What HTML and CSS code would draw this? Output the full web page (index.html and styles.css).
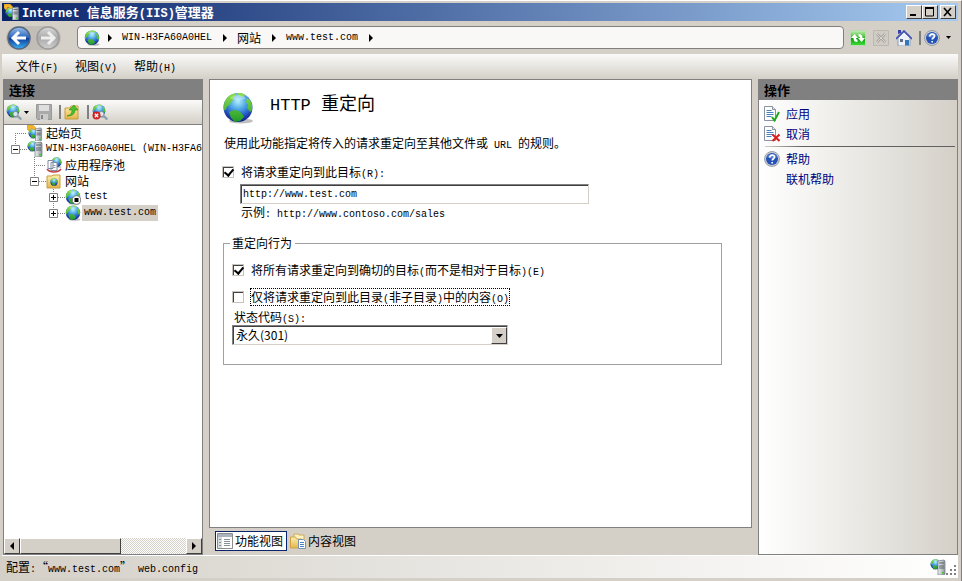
FILE: index.html
```
<!DOCTYPE html>
<html lang="zh-CN">
<head>
  <meta charset="UTF-8" />
  <meta name="viewport" content="width=device-width, initial-scale=1.0"/>
  <title>Internet 信息服务(IIS)管理器</title>
  <link rel="stylesheet" href="styles.css">
</head>
<body>
  <!-- shared icons -->
  <svg class="sprite" aria-hidden="true">
    <defs>
      <radialGradient id="sea" cx="50%" cy="28%" r="70%">
        <stop offset="0" stop-color="#b4effc"/>
        <stop offset="0.4" stop-color="#4fa8e6"/>
        <stop offset="0.75" stop-color="#2457c4"/>
        <stop offset="1" stop-color="#141f8c"/>
      </radialGradient>
      <linearGradient id="land" x1="0" y1="0" x2="0" y2="1">
        <stop offset="0" stop-color="#8fe04a"/>
        <stop offset="1" stop-color="#1f9a2b"/>
      </linearGradient>
      <linearGradient id="metal" x1="0" y1="0" x2="1" y2="0">
        <stop offset="0" stop-color="#f2f4f6"/>
        <stop offset="1" stop-color="#8d959c"/>
      </linearGradient>
      <linearGradient id="folder" x1="0" y1="0" x2="0" y2="1">
        <stop offset="0" stop-color="#fdf0b0"/>
        <stop offset="1" stop-color="#e3b548"/>
      </linearGradient>
      <linearGradient id="blue" x1="0" y1="0" x2="0" y2="1">
        <stop offset="0" stop-color="#9dc3ec"/>
        <stop offset="0.48" stop-color="#2a62bd"/>
        <stop offset="0.52" stop-color="#0d3c9c"/>
        <stop offset="1" stop-color="#3db1f2"/>
      </linearGradient>
      <linearGradient id="silver" x1="0" y1="0" x2="0" y2="1">
        <stop offset="0" stop-color="#d9d9d9"/>
        <stop offset="0.5" stop-color="#a9a9a9"/>
        <stop offset="1" stop-color="#d0d0d0"/>
      </linearGradient>
      <linearGradient id="green" x1="0" y1="0" x2="0" y2="1">
        <stop offset="0" stop-color="#c4f2b4"/>
        <stop offset="0.45" stop-color="#43bb35"/>
        <stop offset="0.55" stop-color="#109c10"/>
        <stop offset="1" stop-color="#3fe23a"/>
      </linearGradient>
    </defs>

    <symbol id="globe" viewBox="0 0 32 32">
      <ellipse cx="19" cy="29" rx="12" ry="2.500" fill="#000" opacity="0.25"/>
      <circle cx="16" cy="15.500" r="14.500" fill="url(#sea)"/>
      <path d="M2 14C2 8 7 2 13 1.500l1 2-3 2 1 2-3 2-1 3-3 2-1 3-2 1zM15 1h5l3 2-2 2-4-1zM25 6l3 2 2 5v5l-2 2-3-4 1-3-2-3zM7 20l5-2 5 1 4 4 1 2-4 4-5 1-4-4z" fill="url(#land)"/>
      <path d="M8 6c4-4 12-4 16 0-4 3-12 3-16 0z" fill="#fff" opacity="0.3"/>
    </symbol>

    <symbol id="server" viewBox="0 0 16 16">
      <path d="M8 2l6-1 1 1v13l-1 1H8z" fill="url(#metal)" stroke="#6d757d" stroke-width="0.7"/>
      <path d="M9 4h5M9 7h5M9 9h5" stroke="#59626b"/>
      <path d="M12 13h2v1.500h-2z" fill="#35d01c"/>
    </symbol>

    <symbol id="host" viewBox="0 0 16 16">
      <svg x="0" y="0" width="11" height="11"><use href="#globe"/></svg>
      <use href="#server"/>
    </symbol>

    <symbol id="start" viewBox="0 0 16 16">
      <svg x="1" y="3" width="11" height="11"><use href="#globe"/></svg>
      <path d="M0 0h6l3 3-2 2-3-2-2 3-2-2z" fill="#f4b52c" stroke="#c98512" stroke-width="0.5"/>
      <svg x="1" y="2" width="15" height="14"><use href="#server"/></svg>
    </symbol>

    <symbol id="help" viewBox="0 0 16 16">
      <circle cx="8" cy="8" r="7.500" fill="#c9cdd4" stroke="#8a8f99" stroke-width="0.8"/>
      <circle cx="8" cy="8" r="6" fill="#2452b5"/>
      <path d="M3 6a5.500 5 0 0 1 10 0c-3 2-7 2-10 0z" fill="#7ba2e0" opacity="0.6"/>
      <path d="M5.800 6.500C5.500 3.500 10.500 3.300 10.500 6c0 1.700-2.300 1.800-2.300 3.600M8.200 11v1.400" fill="none" stroke="#fff" stroke-width="1.700"/>
    </symbol>

    <symbol id="page" viewBox="0 0 16 16">
      <path d="M.5 .5h8l3 3v11H.5z" fill="#fff" stroke="#8b93a0"/>
      <path d="M8.500 .5v3h3" fill="#dfe5ee" stroke="#8b93a0"/>
      <path d="M2.500 4.500h5M2.500 6.500h7M2.500 8.500h7M2.500 10.500h5" stroke="#4a7fc0"/>
    </symbol>

    <symbol id="lens" viewBox="0 0 16 16">
      <svg x="0" y="0" width="14" height="14"><use href="#globe"/></svg>
      <circle cx="9.500" cy="10" r="2.600" fill="#dbe6ec" stroke="#7d8a94"/>
      <path d="M11.700 12.200l3 2.600" stroke="#8aa0b0" stroke-width="2.200" stroke-linecap="round"/>
    </symbol>

    <symbol id="right" viewBox="0 0 4 8"><path d="M0 0l4 4-4 4z"/></symbol>
    <symbol id="left" viewBox="0 0 4 8"><path d="M4 0L0 4l4 4z"/></symbol>
    <symbol id="down" viewBox="0 0 7 4"><path d="M0 0h7L3.500 4z"/></symbol>

    <!-- tree lines and expanders -->
    <symbol id="plus" viewBox="0 0 16 16">
      <path d="M9 8.500h7" stroke="#808080" stroke-dasharray="1 1"/>
      <path d="M.5 4.500h8v8h-8z" fill="#fff" stroke="#808080"/>
      <path d="M2 8.500h5M4.500 6v5" stroke="#000"/>
    </symbol>
    <symbol id="minus" viewBox="0 0 16 16">
      <path d="M9 8.500h7" stroke="#808080" stroke-dasharray="1 1"/>
      <path d="M.5 4.500h8v8h-8z" fill="#fff" stroke="#808080"/>
      <path d="M2 8.500h5" stroke="#000"/>
    </symbol>
    <symbol id="line-up" viewBox="0 0 16 16"><path d="M4.500 0v8" stroke="#808080" stroke-dasharray="1 1"/></symbol>
    <symbol id="line-down" viewBox="0 0 16 16"><path d="M4.500 8v8" stroke="#808080" stroke-dasharray="1 1"/></symbol>
    <symbol id="line-side" viewBox="0 0 16 16"><path d="M4 8.500h12" stroke="#808080" stroke-dasharray="1 1"/></symbol>
  </svg>

  <div class="window">
    <header class="title-bar">
      <svg class="icon"><use href="#start"/></svg>
      <h1><span class="en">Internet </span>信息服务<span class="en">(IIS)</span>管理器</h1>
      <div class="window-buttons">
        <button type="button" aria-label="最小化"><svg viewBox="0 0 12 10"><path d="M2 8h6" stroke="#000" stroke-width="2"/></svg></button>
        <button type="button" aria-label="最大化"><svg viewBox="0 0 12 10"><path d="M1.500 1v8h8V1M1 1h9" fill="none" stroke="#000"/><path d="M1 1h9" stroke="#000" stroke-width="2"/></svg></button>
        <button type="button" class="close" aria-label="关闭"><svg viewBox="0 0 12 10"><path d="M2 1l7 8M9 1L2 9" stroke="#000" stroke-width="1.600"/></svg></button>
      </div>
    </header>

    <div class="address-row">
      <div class="nav-buttons">
        <button type="button" aria-label="后退">
          <svg viewBox="0 0 24 24"><circle cx="12" cy="12" r="11" fill="url(#blue)" stroke="#53657e" stroke-width="1.500"/><path d="M19 12H7M12 6l-6 6 6 6" fill="none" stroke="#fff" stroke-width="3"/></svg>
        </button>
        <button type="button" aria-label="前进">
          <svg viewBox="0 0 24 24"><circle cx="12" cy="12" r="11" fill="url(#silver)" stroke="#9b9b9b" stroke-width="1.500"/><path d="M5 12h12M12 6l6 6-6 6" fill="none" stroke="#eee" stroke-width="3"/></svg>
        </button>
      </div>
      <nav class="address" aria-label="地址">
        <svg class="icon"><use href="#globe"/></svg>
        <svg class="arrow"><use href="#right"/></svg>
        <a href="#" class="en">WIN-H3FA60A0HEL</a>
        <svg class="arrow"><use href="#right"/></svg>
        <a href="#">网站</a>
        <svg class="arrow"><use href="#right"/></svg>
        <a href="#" class="en">www.test.com</a>
        <svg class="arrow"><use href="#right"/></svg>
      </nav>
      <div class="address-tools">
        <button type="button" aria-label="刷新">
          <svg class="icon" viewBox="0 0 16 16"><path d="M.5 .5h15v15H.5z" fill="url(#green)" stroke="#b9d8b4"/><path d="M1 8l3.500-4L8 8H6c0 1 .5 1.500 1.500 1.500V12C5 12 3.500 11 3.500 8zM15 8l-3.500 4L8 8h2c0-1-.5-1.500-1.500-1.500V4c2.500 0 4 1 4 4z" fill="#fff"/></svg>
        </button>
        <button type="button" aria-label="停止">
          <svg class="icon" viewBox="0 0 16 16"><path d="M.5 .5h15v15H.5z" fill="#cfccc6" stroke="#bcb8b0"/><path d="M4 4l8 8M12 4l-8 8" stroke="#a9a6a0" stroke-width="2.500"/><path d="M4 4l8 8M12 4l-8 8" stroke="#d8d6d1"/></svg>
        </button>
        <button type="button" aria-label="主页">
          <svg class="icon" viewBox="0 0 16 16"><path d="M2 8l6-6 6 6v8H2z" fill="#edf2fa" stroke="#8c9cbc"/><path d="M2 4V0h3v3z" fill="#3341a8"/><path d="M0 9l8-8 8 8" fill="none" stroke="#4752b4" stroke-width="1.700"/><path d="M9 10h4v5.500H9z" fill="#3478b8"/><path d="M4 9h3v3H4z" fill="#5d6c84"/></svg>
        </button>
        <span class="divider"></span>
        <button type="button" class="with-arrow" aria-label="帮助">
          <svg class="icon"><use href="#help"/></svg>
          <svg class="arrow-down"><use href="#down"/></svg>
        </button>
      </div>
    </div>

    <div class="menu-bar">
      <button type="button">文件<span class="en">(F)</span></button>
      <button type="button">视图<span class="en">(V)</span></button>
      <button type="button">帮助<span class="en">(H)</span></button>
    </div>

    <div class="panels">
      <aside class="panel connections">
        <h2>连接</h2>
        <div class="toolbar">
          <button type="button" class="with-arrow" aria-label="连接">
            <svg class="icon"><use href="#lens"/></svg>
            <svg class="arrow-down"><use href="#down"/></svg>
          </button>
          <button type="button" aria-label="保存">
            <svg class="icon" viewBox="0 0 16 16"><path d="M.5 .5h15v15h-14l-1-1z" fill="#aaa" stroke="#999"/><path d="M3 1h10v6H3z" fill="#dedede"/><path d="M4 10h8v6H4z" fill="#ccc"/><path d="M5 11h2v4H5z" fill="#888"/></svg>
          </button>
          <span class="divider"></span>
          <button type="button" aria-label="向上">
            <svg class="icon" viewBox="0 0 16 16"><path d="M1 4h5l1-2h7v13H1z" fill="url(#folder)" stroke="#c69c3c"/><path d="M3 12c4-1 5-3 5-6H5l5-5 4 5h-3c0 4-3 6-8 6z" fill="#4cbf2c" stroke="#2c8a18" stroke-width="0.6"/></svg>
          </button>
          <span class="divider"></span>
          <button type="button" aria-label="删除连接">
            <svg class="icon" viewBox="0 0 16 16"><use href="#lens"/><circle cx="4.500" cy="11.500" r="4" fill="#d32020"/><path d="M2.800 9.800l3.400 3.400M6.200 9.800l-3.400 3.400" stroke="#fff" stroke-width="1.300"/></svg>
          </button>
        </div>

        <ul class="tree">
          <li>
            <div class="node">
              <svg class="twig"><use href="#line-side"/><use href="#line-down"/></svg>
              <svg class="icon"><use href="#start"/></svg>
              <a href="#">起始页</a>
            </div>
          </li>
          <li>
            <div class="node">
              <svg class="twig"><use href="#line-up"/><use href="#minus"/></svg>
              <svg class="icon"><use href="#host"/></svg>
              <a href="#" class="en">WIN-H3FA60A0HEL (WIN-H3FA6</a>
            </div>
            <ul>
              <li>
                <div class="node">
                  <svg class="twig"><use href="#line-side"/><use href="#line-up"/><use href="#line-down"/></svg>
                  <svg class="icon" viewBox="0 0 16 16"><svg x="5" y="0" width="11" height="11"><use href="#globe"/></svg><path d="M1 12c3 4 11 4 14 0" fill="none" stroke="#c94040" stroke-width="1.600"/><path d="M2 3.500h5v8H2zM5 5.500h6v8H5z" fill="#fff" stroke="#7d8aa0"/><path d="M6.500 8.500h3M6.500 10.500h3" stroke="#96a2b5"/></svg>
                  <a href="#">应用程序池</a>
                </div>
              </li>
              <li>
                <div class="node">
                  <svg class="twig"><use href="#line-up"/><use href="#minus"/></svg>
                  <svg class="icon" viewBox="0 0 16 16"><path d="M1 3h5l1-1h7v13H1z" fill="url(#folder)" stroke="#c69c3c"/><svg x="4" y="5" width="8" height="8"><use href="#globe"/></svg></svg>
                  <a href="#">网站</a>
                </div>
                <ul>
                  <li>
                    <div class="node">
                      <svg class="twig"><use href="#line-up"/><use href="#line-down"/><use href="#plus"/></svg>
                      <svg class="icon" viewBox="0 0 16 16"><use href="#globe"/><circle cx="11.500" cy="11" r="4.300" fill="#fff" stroke="#777"/><path d="M9.500 9h4v4h-4z"/></svg>
                      <a href="#" class="en">test</a>
                    </div>
                  </li>
                  <li>
                    <div class="node">
                      <svg class="twig"><use href="#line-up"/><use href="#plus"/></svg>
                      <svg class="icon"><use href="#globe"/></svg>
                      <a href="#" class="en selected">www.test.com</a>
                    </div>
                  </li>
                </ul>
              </li>
            </ul>
          </li>
        </ul>

        <div class="scroll-bar">
          <button type="button" aria-label="向左滚动"><svg class="arrow"><use href="#left"/></svg></button>
          <div class="thumb"></div>
          <button type="button" class="scroll-right" aria-label="向右滚动"><svg class="arrow"><use href="#right"/></svg></button>
        </div>
      </aside>

      <main class="center">
        <form class="feature">
          <div class="feature-title">
            <svg class="big-icon"><use href="#globe"/></svg>
            <h2><span class="en">HTTP </span>重定向</h2>
          </div>
          <p class="intro">使用此功能指定将传入的请求重定向至其他文件或<span class="en"> URL </span>的规则。</p>

          <div class="check-row">
            <input type="checkbox" id="redirect" checked>
            <label for="redirect">将请求重定向到此目标<span class="en">(R):</span></label>
          </div>
          <div class="target">
            <input type="text" aria-label="重定向目标" value="http://www.test.com">
            <p>示例<span class="en">: http://www.contoso.com/sales</span></p>
          </div>

          <fieldset>
            <legend>重定向行为</legend>
            <div class="check-row">
              <input type="checkbox" id="exact" checked>
              <label for="exact">将所有请求重定向到确切的目标<span class="en">(</span>而不是相对于目标<span class="en">)(E)</span></label>
            </div>
            <div class="check-row">
              <input type="checkbox" id="only-dir">
              <label for="only-dir" class="focused">仅将请求重定向到此目录<span class="en">(</span>非子目录<span class="en">)</span>中的内容<span class="en">(O)</span></label>
            </div>
            <label class="status-label" for="status">状态代码<span class="en">(S):</span></label>
            <div class="select-box">
              <select id="status">
                <option>永久(301)</option>
                <option>已找到(302)</option>
                <option>临时(307)</option>
              </select>
              <span class="select-arrow"><svg class="arrow-down"><use href="#down"/></svg></span>
            </div>
          </fieldset>
        </form>

        <div class="view-tabs">
          <button type="button" class="active">
            <svg class="icon" viewBox="0 0 16 16"><path d="M.5 .5h15v15H.5z" fill="#fff" stroke="#8c8c8c"/><path d="M1 1h14v3H1z" fill="#a9b4c0"/><path d="M1 4h4v11H1z" fill="#d9dde0"/><path d="M2 6.500h2M2 9.500h2M2 12.500h2M7 6.500h6M7 8.500h6M7 10.500h6M7 12.500h6" stroke="#889098"/></svg>
            功能视图
          </button>
          <button type="button">
            <svg class="icon" viewBox="0 0 16 16"><path d="M4 1h4l1 1h5v10H4z" fill="#fff3c4" stroke="#d0aa54"/><path d="M.5 4h5l1 2h5v9H.5z" fill="url(#folder)" stroke="#d0a348"/><path d="M8.500 6.500h5l2 2v7h-7z" fill="#fff" stroke="#7890b0"/><path d="M10 9.500h4M10 11.500h4M10 13.500h4" stroke="#4d82c4"/></svg>
            内容视图
          </button>
        </div>
      </main>

      <aside class="panel actions">
        <h2>操作</h2>
        <ul>
          <li>
            <svg class="icon" viewBox="0 0 16 16"><use href="#page"/><path d="M8 11l2.500 3.500L15 6" fill="none" stroke="#22a81c" stroke-width="2"/></svg>
            <a href="#">应用</a>
          </li>
          <li>
            <svg class="icon" viewBox="0 0 16 16"><use href="#page"/><path d="M8.500 8.500l7 6.500M15.500 8.500l-7 6.500" stroke="#dc1c1c" stroke-width="2"/></svg>
            <a href="#">取消</a>
          </li>
        </ul>
        <hr>
        <ul>
          <li>
            <svg class="icon"><use href="#help"/></svg>
            <a href="#">帮助</a>
          </li>
          <li class="no-icon"><a href="#">联机帮助</a></li>
        </ul>
      </aside>
    </div>

    <footer class="status-bar">
      <span>配置<span class="en">:</span>“<span class="en">www.test.com</span>”<span class="en"> web.config</span></span>
      <svg class="icon"><use href="#host"/></svg>
      <svg class="grip" viewBox="0 0 10 10"><path d="M8 0h2v2H8zM8 4h2v2H8zM4 4h2v2H4zM8 8h2v2H8zM4 8h2v2H4zM0 8h2v2H0z" fill="#808080"/></svg>
    </footer>
  </div>
</body>
</html>
```

FILE: styles.css
```
* {
  box-sizing: border-box;
}

body {
  margin: 0;
  background: #d4d0c8;
  color: #000;
  font-family: "Noto Sans CJK SC", sans-serif;
  font-size: 12px;
  line-height: 16px;
}

h1, h2, p, ul {
  margin: 0;
  padding: 0;
}

ul {
  list-style: none;
}

a {
  color: inherit;
  text-decoration: none;
}

button, input, select {
  margin: 0;
  padding: 0;
  border: none;
  background: none;
  color: inherit;
  font: inherit;
}

svg {
  display: block;
  flex: none;
}

.sprite {
  position: absolute;
  width: 0;
  height: 0;
}

.en {
  font-family: "Liberation Mono", monospace;
  font-size: 10px;
  line-height: 1;
  white-space: pre;
}

.icon {
  width: 16px;
  height: 16px;
}

.arrow {
  width: 4px;
  height: 8px;
}

.arrow-down {
  width: 5px;
  height: 3px;
}

.divider {
  width: 2px;
  height: 14px;
  background: #808080;
}

.window {
  display: flex;
  flex-direction: column;
  min-height: 100vh;
  padding: 2px 3px 3px 2px;
  border-top: 1px solid #fff;
  border-right: 1px solid #808080;
}

/* title bar */
.title-bar {
  display: flex;
  align-items: center;
  height: 18px;
  padding: 0 2px;
  background: linear-gradient(to right, #0a246a, #a6caf0);
}

.title-bar h1 {
  flex: 1;
  padding-left: 2px;
  color: #fff;
  font-size: 13px;
  line-height: 18px;
}

.title-bar .en {
  font-size: 12px;
}

.window-buttons {
  display: flex;
}

.window-buttons button {
  width: 16px;
  height: 14px;
  padding: 1px;
  background: #d4d0c8;
  border: 1px solid;
  border-color: #fff #404040 #404040 #fff;
}

.window-buttons .close {
  margin-left: 2px;
}

.window-buttons svg {
  width: 12px;
  height: 10px;
}

/* address row */
.address-row {
  display: flex;
  align-items: center;
  gap: 14px;
  height: 33px;
  padding: 0 7px 0 4px;
}

.nav-buttons {
  display: flex;
  gap: 5px;
  padding: 0 1px;
  border-radius: 13px;
  background: #c2beb7;
}

.nav-buttons svg {
  width: 24px;
  height: 24px;
}

.address {
  display: flex;
  flex: 1;
  align-items: center;
  gap: 8px;
  height: 23px;
  margin-left: 2px;
  padding: 0 6px;
  background: #f9f8f6;
  border: 1px solid #808080;
  border-radius: 4px;
}

.address a {
  padding: 0 3px 0 2px;
}

.address-tools {
  display: flex;
  align-items: center;
  gap: 7px;
  margin-left: -8px;
}

.with-arrow {
  display: flex;
  align-items: center;
  gap: 6px;
}

.address-tools .divider {
  margin-right: -4px;
}

/* menu */
.menu-bar {
  display: flex;
  gap: 17px;
  height: 25px;
  padding: 0 14px;
  background: linear-gradient(#fafaf9, #d4d0c8);
}

.menu-bar button {
  height: 24px;
}

/* three columns */
.panels {
  display: grid;
  flex: 1;
  grid-template-columns: 200px 1fr 200px;
  gap: 6px;
  padding-left: 1px;
}

.panel {
  display: flex;
  flex-direction: column;
  min-width: 0;
  border: 1px solid #808080;
}

.panel h2 {
  height: 20px;
  padding-left: 5px;
  background: #808080;
  font-size: 13px;
  line-height: 20px;
}

.connections {
  background: #fff;
}

.toolbar {
  display: flex;
  align-items: center;
  gap: 7px;
  height: 25px;
  padding-left: 2px;
  background: linear-gradient(#fafaf9, #d4d0c8);
  border-bottom: 1px solid #808080;
}

.toolbar .with-arrow {
  gap: 2px;
}

.toolbar .divider {
  margin-right: -4px;
}

.tree {
  flex: 1;
  padding-left: 7px;
}

.tree ul {
  padding-left: 19px;
}

.node {
  display: flex;
  align-items: center;
  height: 16px;
}

.node .twig {
  width: 16px;
  height: 16px;
}

.node a {
  padding: 0 0 0 2px;
  margin-left: 1px;
  white-space: pre;
}

.node .en {
  line-height: 16px;
}

.node .selected {
  padding-right: 2px;
  background: #d4d0c8;
}

.scroll-bar {
  display: flex;
  height: 16px;
  background: repeating-conic-gradient(#fff 0 25%, #d4d0c8 0 50%) 0 0 / 2px 2px;
}

.scroll-bar button,
.thumb,
.select-arrow {
  display: flex;
  align-items: center;
  justify-content: center;
  width: 16px;
  background: #d4d0c8;
  border: 1px solid;
  border-color: #fff #404040 #404040 #fff;
}

.scroll-bar .thumb {
  width: 51%;
}

.scroll-bar .scroll-right {
  margin-left: auto;
}

/* redirect page */
.center {
  display: flex;
  flex-direction: column;
  min-width: 0;
}

.feature {
  flex: 1;
  padding: 12px 29px 0 12px;
  background: #fff;
  border: 1px solid #808080;
}

.feature-title {
  display: flex;
  gap: 16px;
}

.big-icon {
  width: 32px;
  height: 32px;
}

.feature-title h2 {
  font-size: 18px;
  font-weight: normal;
  line-height: 20px;
}

.feature-title .en {
  font-size: 17px;
}

.intro {
  padding: 11px 2px 0;
}

.check-row {
  display: flex;
  align-items: center;
  gap: 7px;
}

input[type="checkbox"] {
  appearance: none;
  width: 12px;
  height: 12px;
  background: #fff;
  border: 1px solid;
  border-color: #404040 #d4d0c8 #d4d0c8 #404040;
  outline: 1px solid #c8c4bc;
  outline-offset: -1px;
  box-shadow: inset 1px 1px #404040;
}

input[type="checkbox"]:checked::before {
  content: "";
  display: block;
  width: 4px;
  height: 7px;
  margin: 0 0 0 3px;
  border: solid #000;
  border-width: 0 2px 2px 0;
  transform: rotate(40deg);
}

.feature > .check-row {
  padding-top: 13px;
}

.target {
  padding: 4px 0 0 18px;
}

.target input {
  display: block;
  width: 349px;
  max-width: 100%;
  height: 20px;
  padding: 0 2px;
  border: 1px solid;
  border-color: #808080 #d4d0c8 #d4d0c8 #808080;
  box-shadow: inset 1px 1px #404040;
  font-family: "Liberation Mono", monospace;
  font-size: 10px;
}

.target p {
  padding-left: 1px;
}

fieldset {
  min-width: 0;
  margin: 15px 0 0 1px;
  padding: 11px 8px 19px;
  border: 1px solid #a0a0a0;
}

legend {
  padding: 0 3px 0 2px;
  margin-left: -2px;
}

fieldset .check-row {
  margin-bottom: 11px;
}

fieldset .check-row:nth-of-type(2) {
  margin-bottom: 4px;
}

.focused {
  outline: 1px dotted #000;
}

.status-label {
  display: block;
  padding-left: 2px;
}

.select-box {
  display: grid;
  width: 276px;
  max-width: 100%;
  height: 20px;
  border: 1px solid;
  border-color: #808080 #d4d0c8 #d4d0c8 #808080;
  box-shadow: inset 1px 1px #404040;
}

.select-box select {
  grid-area: 1 / 1;
  appearance: none;
  padding-left: 3px;
}

.select-arrow {
  grid-area: 1 / 1;
  justify-self: end;
  margin: 1px 0 0;
  pointer-events: none;
}

.select-arrow .arrow-down {
  width: 7px;
  height: 4px;
}

/* bottom tabs */
.view-tabs {
  display: flex;
  height: 27px;
  padding: 3px 6px 4px;
}

.view-tabs button {
  display: flex;
  align-items: center;
  gap: 2px;
  padding: 0 3px;
}

.view-tabs .active {
  padding: 0 3px 0 1px;
  background: #fff;
  border: 1px solid #0a246a;
}

/* actions */
.actions {
  background: linear-gradient(to right, #fff, #e3e2dc 65%, #d4d0c8);
  color: #000080;
}

.actions h2 {
  color: #000;
}

.actions ul {
  padding: 0 5px;
}

.actions h2 + ul {
  padding-top: 4px;
}

.actions li {
  display: flex;
  align-items: center;
  gap: 6px;
  height: 20px;
}

.actions .no-icon {
  padding-left: 22px;
}

.actions hr {
  width: 96%;
  height: 1px;
  margin: 2px 2px 2px auto;
  border: none;
  background: linear-gradient(to right, #d4d0c8, #606060 20%);
}

/* status bar */
.status-bar {
  display: flex;
  align-items: center;
  height: 23px;
  padding: 0 2px 0 4px;
  background: linear-gradient(to right, #d4d0c8, #fff);
  border-top: 1px solid #fff;
}

.status-bar > span {
  flex: 1;
}

.grip {
  width: 10px;
  height: 10px;
  align-self: flex-end;
  margin-bottom: 3px;
}
```
